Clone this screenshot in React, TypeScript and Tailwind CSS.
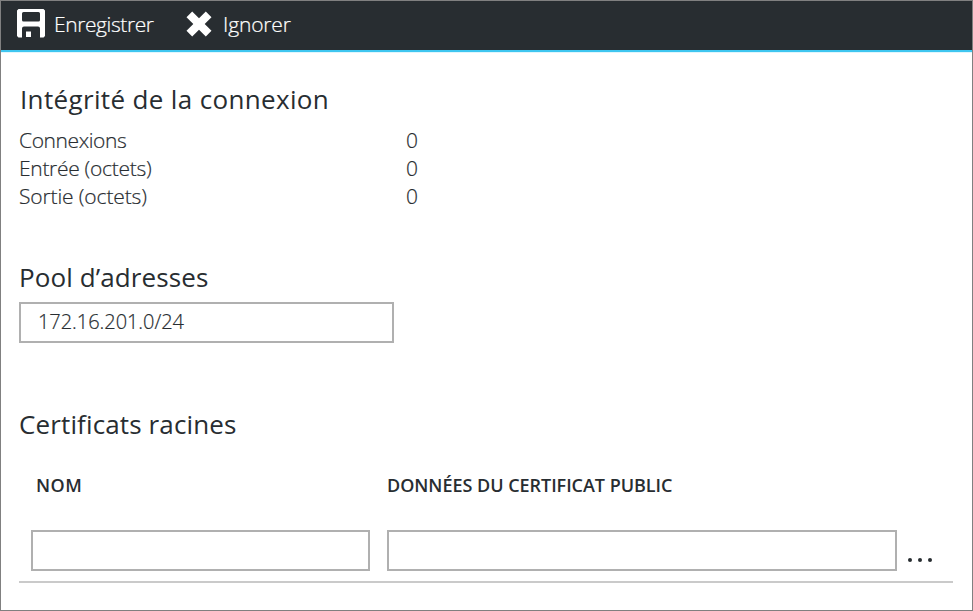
import React from "react";

const stats = [
  { label: "Connexions", value: "0", spacing: "tracking-[-0.4px]" },
  { label: "Entrée (octets)", value: "0", spacing: "tracking-[-0.3px]" },
  { label: "Sortie (octets)", value: "0", spacing: "tracking-[-0.13px]" },
];

function SaveIcon() {
  return (
    <svg width="28" height="29" viewBox="0 0 28 29" fill="#fff" fillRule="evenodd">
      <path d="M1.500 0H26.500L28 1.500V27L26.500 28.500H23V19.500Q23 17.500 21 17.500H7Q5 17.500 5 19.500V28.500H1.500L0 27V1.500ZM5 4.500V11Q5 12.500 6.500 12.500H21.500Q23 12.500 23 11V4.500Q23 3 21.500 3H6.500Q5 3 5 4.500Z" />
      <path d="M9 22.500H14V28H9Z" />
    </svg>
  );
}

function DiscardIcon() {
  return (
    <svg width="26" height="26" viewBox="0 0 26 26" fill="#fff">
      <path d="M6.200 0.500L13 7.200L19.800 0.500L25.500 6.200L18.700 13L25.500 19.800L19.800 25.500L13 18.800L6.200 25.500L0.500 19.800L7.300 13L0.500 6.200Z" />
    </svg>
  );
}

function Heading({ children, className }: { children: React.ReactNode; className: string }) {
  return <h2 className={`h-9 whitespace-nowrap text-[26px] leading-9 font-normal ${className}`}>{children}</h2>;
}

export default function App() {
  return (
    <div className="h-[611px] w-[973px] overflow-hidden border border-[#808080] bg-white font-['Open_Sans','Noto_Sans',sans-serif] text-[#282d31]">
      <header className="flex h-[51px] border-b-2 border-[#3fc6f0] bg-[#282d31] pl-4 text-[21px] font-light leading-7 text-white shadow-[0_1px_0_#e2f6fc]">
        <button className="flex h-12 w-[169px] items-start pt-2">
          <SaveIcon />
          <span className="ml-[9px] mt-px tracking-[-0.4px] [-webkit-text-stroke:0.2px]">Enregistrer</span>
        </button>
        <button className="flex h-12 items-start pt-2">
          <span className="mt-[2px]"><DiscardIcon /></span>
          <span className="ml-[11px] mt-px tracking-[-0.15px] [-webkit-text-stroke:0.2px]">Ignorer</span>
        </button>
      </header>

      <main className="flex flex-col items-start pl-[18px] pt-[29px]">
        <Heading className="pl-px tracking-[0.35px]">Intégrité de la connexion</Heading>
        <dl className="mt-[9px] text-[21px] font-light leading-7 [-webkit-text-stroke:0.2px]">
          {stats.map((s) => (
            <div key={s.label} className="flex h-7">
              <dt className={`w-[387px] ${s.spacing}`}>{s.label}</dt>
              <dd>{s.value}</dd>
            </div>
          ))}
        </dl>

        <Heading className="mt-[49px] tracking-[0.1px]">Pool d’adresses</Heading>
        <input
          defaultValue="172.16.201.0/24"
          className="mt-[7px] h-[41px] w-[375px] border-2 border-[#b0b0b0] pb-[2px] pl-[17px] text-[20px] font-light tracking-[-0.05px] outline-none [-webkit-text-stroke:0.2px]"
        />

        <Heading className="mt-[63px] tracking-[0.13px]">Certificats racines</Heading>
        <div className="mt-[31px] flex pl-[17px] text-[18px] font-semibold leading-6 whitespace-nowrap">
          <div className="w-[351px] tracking-[0.5px]">NOM</div>
          <div className="tracking-[-0.03px]">DONNÉES DU CERTIFICAT PUBLIC</div>
        </div>
        <div className="mt-[33px] flex h-[53px] w-[934px] border-b-2 border-[#cacaca] pl-3">
          <input className="h-[41px] w-[339px] border-2 border-[#b0b0b0] outline-none" />
          <input className="ml-[17px] h-[41px] w-[510px] border-2 border-[#b0b0b0] outline-none" />
          <button className="ml-[11px] mt-7 flex h-1 gap-[6px]">
            <span className="size-1 rounded-full bg-[#282d31]" />
            <span className="size-1 rounded-full bg-[#282d31]" />
            <span className="size-1 rounded-full bg-[#282d31]" />
          </button>
        </div>
      </main>
    </div>
  );
}
